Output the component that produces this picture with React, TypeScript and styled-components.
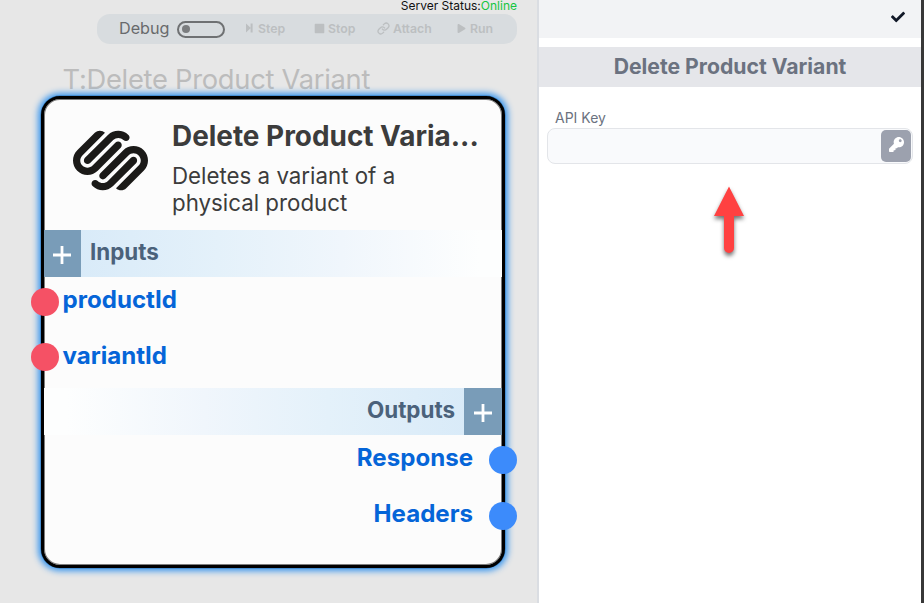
import React from "react";
import styled, { createGlobalStyle } from "styled-components";
import { SiSquarespace } from "react-icons/si";
import { FaCheck, FaKey, FaPlay, FaStop } from "react-icons/fa";
import { Link } from "lucide-react";

const GlobalStyle = createGlobalStyle`
  * { box-sizing: border-box; }
  body { margin: 0; font-family: Inter, "Liberation Sans", sans-serif; }
`;

const Shell = styled.div`
  display: grid;
  grid-template-columns: 539px 382px 3px;
  width: 924px;
  height: 603px;
  overflow: hidden;
  background: #fff;
`;

const Canvas = styled.main`
  background: #e7e7e7;
  border-right: 2px solid #dadde2;
  display: flex;
  flex-direction: column;
  white-space: nowrap;
`;

const Status = styled.div`
  height: 14px;
  padding-right: 20px;
  text-align: right;
  font-size: 12px;
  line-height: 12px;
  color: #111;
`;

const Online = styled.span`
  color: #14c541;
`;

const Toolbar = styled.div`
  margin-left: 97px;
  width: 420px;
  height: 30px;
  border-radius: 13px;
  background: #d8dcdf;
  display: grid;
  grid-template-columns: 80px 69px 68px 63px 80px 1fr;
  align-items: center;
  color: #bcbfc1;
`;

const DebugLabel = styled.span`
  padding-left: 22px;
  font-size: 16.2px;
  line-height: 20px;
  margin-top: -2px;
  color: #686a6c;
`;

const Toggle = styled.span`
  width: 48px;
  height: 17px;
  border: 2px solid #6f7173;
  border-radius: 9px;
  display: flex;
  align-items: center;
  padding-left: 3px;
`;

const Knob = styled.span`
  width: 8px;
  height: 8px;
  border-radius: 50%;
  background: #7b7d7f;
`;

const Action = styled.span<{ $gap: number }>`
  display: flex;
  align-items: center;
  gap: ${(p) => p.$gap}px;
  font-size: 12.3px;
  line-height: 16px;
  font-weight: 600;

  svg { margin-top: -2px; }
`;

const FlowTitle = styled.div`
  margin: 19px 0 0 62.5px;
  height: 33px;
  font-size: 27.3px;
  line-height: 34px;
  letter-spacing: -0.27px;
  color: #bcbcbc;
`;

const Card = styled.section`
  margin-left: 41px;
  width: 464px;
  height: 472px;
  border: 3px solid #000;
  border-radius: 19px;
  background: #fcfcfc;
  box-shadow: 0 0 6px 2.5px #3b97ee, 0 0 0 0.5px #000, inset 0 0 0 1px rgba(0, 0, 0, 0.5);
`;

const CardHeader = styled.header`
  height: 131px;
  padding: 18px 0 0 28px;
  display: grid;
  grid-template-columns: 100px 1fr;
`;

const Logo = styled(SiSquarespace)`
  width: 75px;
  height: 75px;
  margin: 5.5px 0 0 0.5px;
  color: #1b1a18;
`;

const CardTitle = styled.h1`
  margin: 0;
  font-size: 27.9px;
  line-height: 38px;
  font-weight: 700;
  color: #3c3c3c;
`;

const Description = styled.p`
  margin: 6.5px 0 0;
  font-size: 22.3px;
  line-height: 27px;
  color: #3c3c3c;
  white-space: pre-line;
`;

const Band = styled.div<{ $end?: boolean }>`
  height: 47px;
  display: flex;
  flex-direction: ${(p) => (p.$end ? "row-reverse" : "row")};
  background: linear-gradient(${(p) => (p.$end ? "to left" : "to right")}, #d6e9f8, #e4f1fa 38%, #f0f6fc 65%, #fdfefe 95%);
`;

const PlusBox = styled.span<{ $end?: boolean }>`
  width: ${(p) => (p.$end ? 38 : 37)}px;
  display: grid;
  place-items: center;
  background: #799cb8;
  svg { width: 20px; height: 20px; margin: 2px 1px 0 0; }
`;

const BandLabel = styled.span`
  padding: 0 9px;
  font-size: 22.4px;
  line-height: 44px;
  font-weight: 700;
  color: #4b627b;
`;

const Ports = styled.div<{ $end?: boolean }>`
  height: ${(p) => (p.$end ? "112px" : "111px")};
  display: flex;
  flex-direction: column;
  align-items: ${(p) => (p.$end ? "flex-end" : "flex-start")};
`;

const Port = styled.div<{ $end?: boolean }>`
  height: 56px;
  display: flex;
  flex-direction: ${(p) => (p.$end ? "row-reverse" : "row")};
  gap: ${(p) => (p.$end ? 15.5 : 3.5)}px;
  margin: ${(p) => (p.$end ? "0 -14.5px 0 0" : "0 0 0 -13px")};
`;

const PortDot = styled.span<{ $end?: boolean }>`
  width: 28px;
  height: 28px;
  margin-top: 10.7px;
  border-radius: 50%;
  background: ${(p) => (p.$end ? "#3c8bfb" : "#f55165")};
`;

const PortName = styled.span`
  font-size: 24.1px;
  line-height: 45px;
  font-weight: 700;
  color: #0565d8;
`;

const Panel = styled.aside`
  background: #fff;
`;

const PanelBar = styled.div`
  height: 38px;
  padding: 10px 16px 0 0;
  background: #f2f3f5;
  display: flex;
  justify-content: flex-end;
  color: #111827;
`;

const PanelTitle = styled.h2`
  height: 40px;
  margin: 9px 0 0;
  background: #e5e6ea;
  text-align: center;
  font-size: 21.2px;
  line-height: 38px;
  font-weight: 700;
  color: #6b7280;
`;

const FieldLabel = styled.div`
  margin: 21px 0 0 16px;
  height: 20px;
  font-size: 14px;
  line-height: 20px;
  color: #6b7280;
`;

const Field = styled.div`
  margin-left: 8px;
  width: 366px;
  height: 36px;
  padding: 1px;
  border: 1px solid #e3e5e9;
  border-radius: 8px;
  background: #f9fafc;
  display: flex;
  justify-content: flex-end;
`;

const KeyButton = styled.button`
  width: 30px;
  height: 32px;
  padding: 0 0 3px;
  border: 0;
  border-radius: 5px;
  background: #9ca1ae;
  color: #fff;
  display: grid;
  place-items: center;
`;

const Pointer = styled.svg`
  display: block;
  margin: 18px 0 0 169px;
  filter: drop-shadow(0 3px 2px rgba(0, 0, 0, 0.55));
`;

const WindowEdge = styled.div`
  background: #383838;
`;

const Plus = ({ end }: { end?: boolean }) => (
  <PlusBox $end={end}>
    <svg viewBox="0 0 20 20"><path d="M10 1v18M1 10h18" stroke="#fff" strokeWidth="2.8" /></svg>
  </PlusBox>
);

const StepIcon = () => (
  <svg width="7" height="10" viewBox="0 0 7 10" fill="currentColor">
    <path d="M0 .5 4.800 5 0 9.500ZM4.600 .5h2v9h-2z" />
  </svg>
);

const inputs = ["productId", "variantId"];
const outputs = ["Response", "Headers"];

export default function App() {
  return (
    <>
      <GlobalStyle />
      <Shell>
        <Canvas>
          <Status>Server Status:<Online>Online</Online></Status>
          <Toolbar>
            <DebugLabel>Debug</DebugLabel>
            <Toggle><Knob /></Toggle>
            <Action $gap={5}><StepIcon />Step</Action>
            <Action $gap={3}><FaStop size={11} />Stop</Action>
            <Action $gap={3}><Link size={13} strokeWidth={2.4} />Attach</Action>
            <Action $gap={4}><FaPlay size={9} />Run</Action>
          </Toolbar>
          <FlowTitle>T:Delete Product Variant</FlowTitle>
          <Card>
            <CardHeader>
              <Logo />
              <div>
                <CardTitle>Delete Product Varia...</CardTitle>
                <Description>{"Deletes a variant of a\nphysical product"}</Description>
              </div>
            </CardHeader>
            <Band><Plus /><BandLabel>Inputs</BandLabel></Band>
            <Ports>
              {inputs.map((name) => (
                <Port key={name}><PortDot /><PortName>{name}</PortName></Port>
              ))}
            </Ports>
            <Band $end><Plus end /><BandLabel>Outputs</BandLabel></Band>
            <Ports $end>
              {outputs.map((name) => (
                <Port key={name} $end><PortDot $end /><PortName>{name}</PortName></Port>
              ))}
            </Ports>
          </Card>
        </Canvas>
        <Panel>
          <PanelBar><FaCheck size={14} /></PanelBar>
          <PanelTitle>Delete Product Variant</PanelTitle>
          <FieldLabel>API Key</FieldLabel>
          <Field><KeyButton aria-label="API key"><FaKey size={15} /></KeyButton></Field>
          <Pointer width="42" height="78" viewBox="0 0 42 78">
            <path d="M21 4.500 36 34H26V66a5 5 0 0 1-10 0V34H6Z" fill="#ff4141" />
          </Pointer>
        </Panel>
        <WindowEdge />
      </Shell>
    </>
  );
}
